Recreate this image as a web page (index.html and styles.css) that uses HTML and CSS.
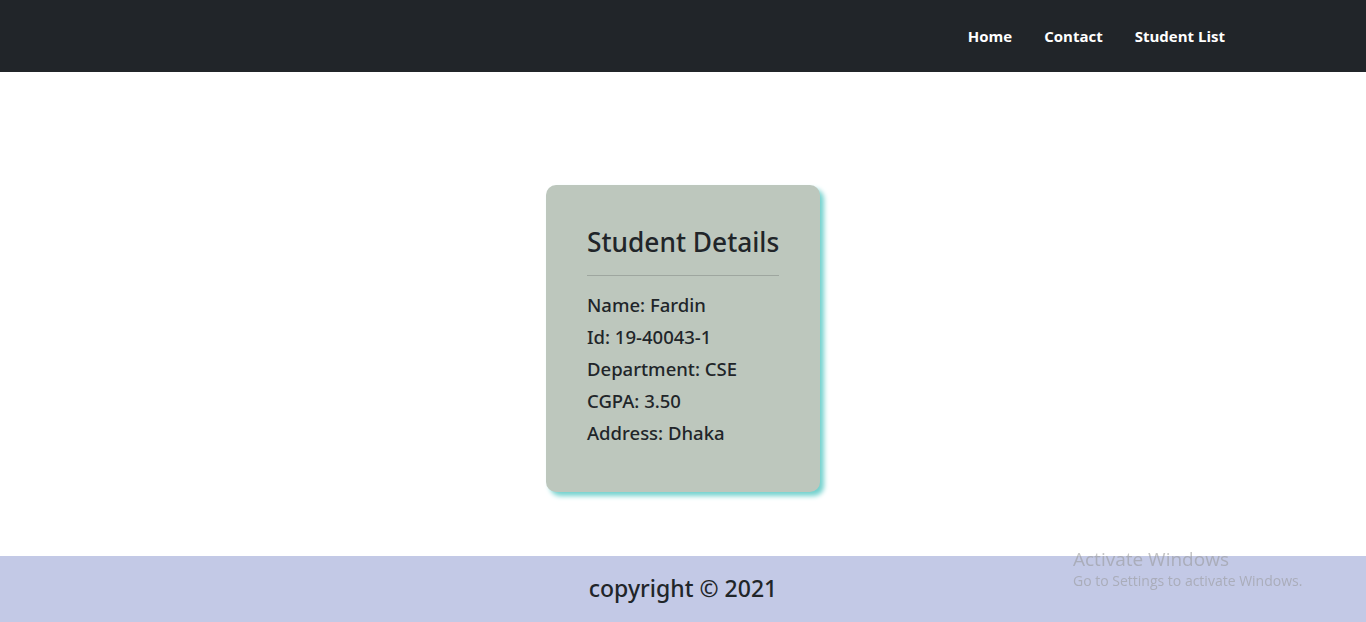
FILE: index.html
```html
<!DOCTYPE html>
<html>
<head>
<meta charset="utf-8">
<link rel="stylesheet" href="styles.css">
</head>
<body>
<header class="navbar">
  <nav class="nav-links">
    <a href="#">Home</a>
    <a href="#">Contact</a>
    <a href="#">Student List</a>
  </nav>
</header>
<main class="content">
  <div class="card">
    <h2 class="card-title">Student Details</h2>
    <hr class="divider">
    <p>Name: Fardin</p>
    <p>Id: 19-40043-1</p>
    <p>Department: CSE</p>
    <p>CGPA: 3.50</p>
    <p>Address: Dhaka</p>
  </div>
</main>
<footer class="footer">
  <p>copyright © 2021</p>
</footer>
<div class="watermark">
  <div class="wm-title">Activate Windows</div>
  <div class="wm-sub">Go to Settings to activate Windows.</div>
</div>
</body>
</html>
```

FILE: styles.css
```css
* { box-sizing: border-box; }
html, body { margin: 0; padding: 0; }
body {
  font-family: "Noto Sans", "Open Sans", sans-serif;
  color: #212529;
  background: #fff;
}
.navbar {
  height: 72px;
  background: #212529;
  display: flex;
  justify-content: flex-end;
  align-items: center;
  padding-right: 141px;
}
.nav-links {
  display: flex;
  gap: 32px;
}
.nav-links a {
  color: #fff;
  text-decoration: none;
  font-family: "Open Sans", sans-serif;
  font-weight: 700;
  font-size: 15px;
}
.content {
  height: 484px;
  display: flex;
  justify-content: center;
  padding-top: 113px;
}
.card {
  width: 274px;
  height: 307px;
  background: #bdc7bd;
  border-radius: 10px;
  box-shadow: 4px 4px 5px #74d2ce;
  padding: 38px 41px 0;
}
.card-title {
  margin: 0;
  font-size: 26.3px;
  font-weight: 500;
  line-height: 38px;
  white-space: nowrap;
}
.divider {
  border: 0;
  border-top: 1px solid #9ea69f;
  margin: 14px 0 13px;
}
.card p {
  margin: 0;
  font-size: 18.5px;
  line-height: 32px;
  font-weight: 500;
  white-space: nowrap;
}
.footer {
  height: 66px;
  background: #c3c9e6;
  display: flex;
  justify-content: center;
  align-items: center;
  padding-bottom: 3px;
}
.footer p {
  margin: 0;
  font-size: 23px;
  font-weight: 500;
}
.watermark {
  position: fixed;
  left: 1073px;
  top: 547px;
  color: rgba(150,150,150,0.55);
  font-family: "Open Sans", sans-serif;
}
.wm-title { font-size: 19px; line-height: 24px; }
.wm-sub { font-size: 14px; line-height: 20px; }
```
